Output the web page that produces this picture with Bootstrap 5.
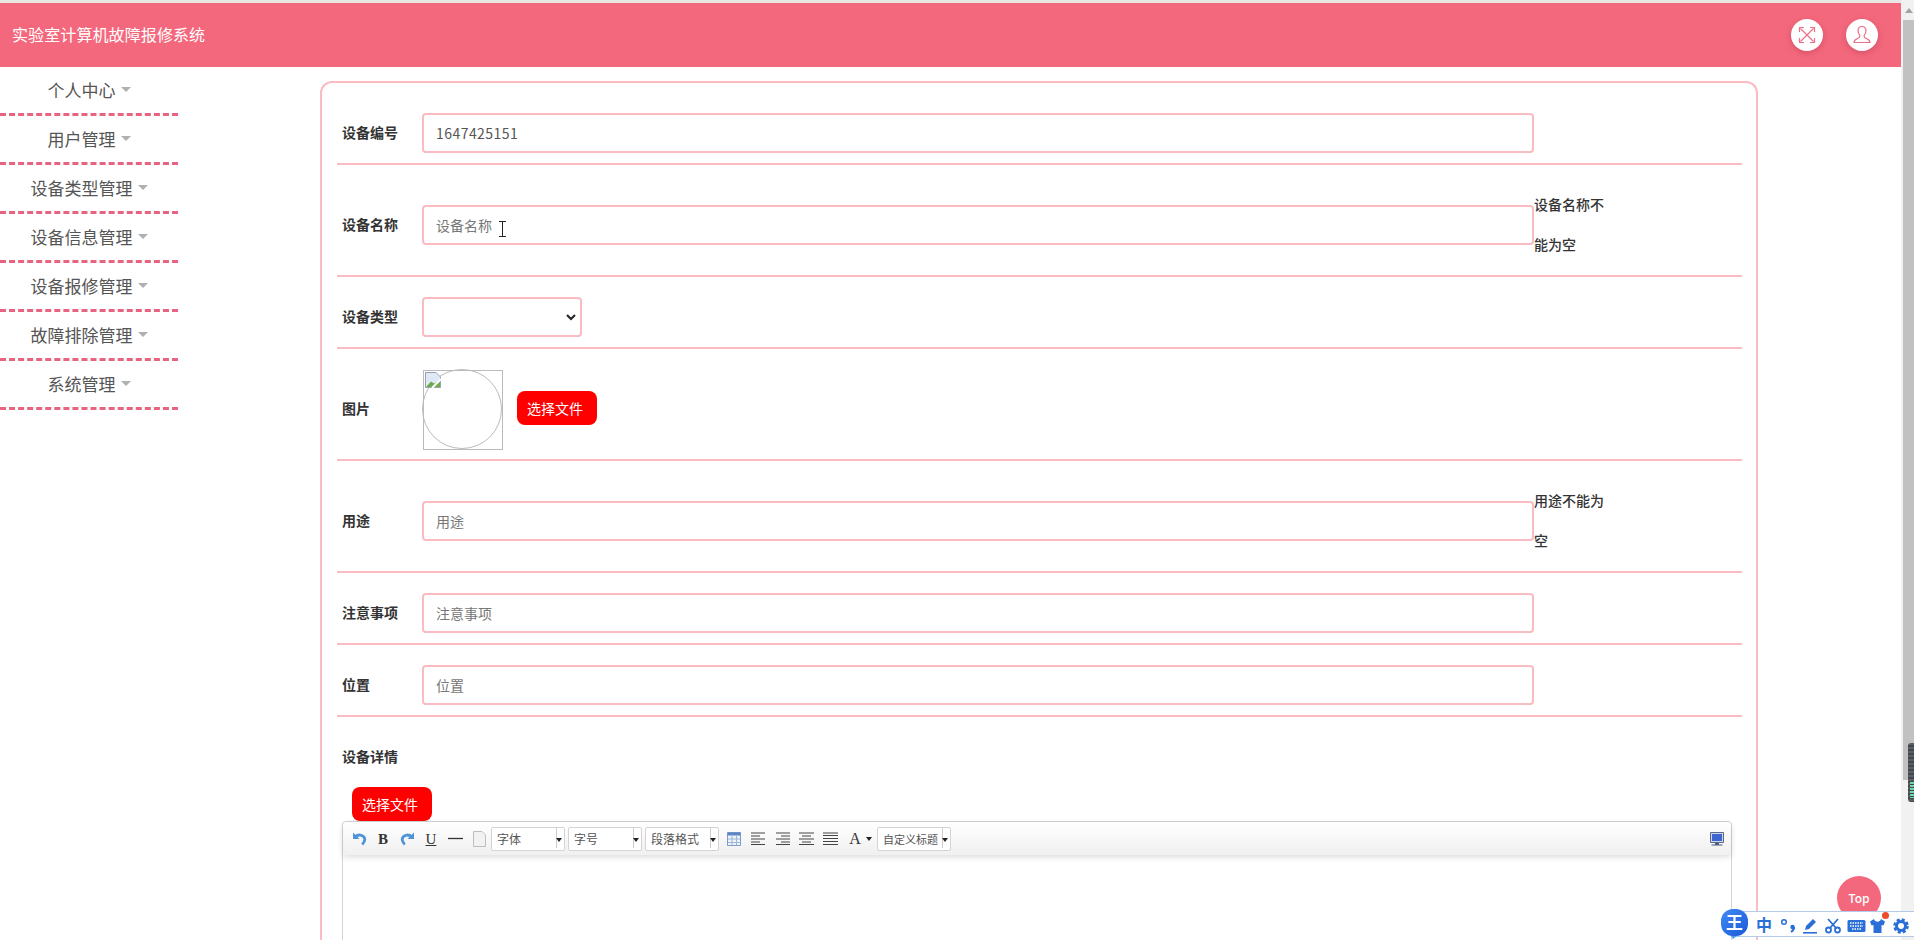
<!DOCTYPE html>
<html lang="zh-CN">
<head>
  <meta charset="UTF-8">
  <meta name="viewport" content="width=device-width, initial-scale=1.0">
  <title>实验室计算机故障报修系统</title>
  <link href="https://cdn.jsdelivr.net/npm/bootstrap@5.3.0/dist/css/bootstrap.min.css" rel="stylesheet">
  <style>
    html, body { height: 940px; overflow: hidden; }
    body { font-family: "Noto Sans CJK SC", "Noto Sans", sans-serif; font-size: 14px; color: #333; background: #fff; }
    .page-main { width: 1901px; height: 940px; overflow: hidden; }

    /* fake browser scrollbar */
    .fake-scroll { width: 13px; height: 940px; background: #f1f1f1; position: relative; }
    .fake-scroll .arrow { position: absolute; left: 4px; top: 8px; width: 0; height: 0; border: 4px solid transparent; border-top: 0; border-bottom: 5px solid #a3a3a3; }
    .fake-scroll .thumb { position: absolute; left: 2px; right: 0; top: 20px; height: 760px; background: #c1c1c1; }
    .fake-scroll .dock { position: absolute; left: 7px; right: 0; top: 743px; height: 59px; border-radius: 3px 0 0 3px; background: repeating-linear-gradient(#5b5e66 0 2px, #43464d 2px 4px); }
    .fake-scroll .dock-low { position: absolute; left: 9px; right: 0; top: 782px; height: 16px; background: repeating-linear-gradient(#6fd6ae 0 2px, #43464d 2px 3px); }

    .top-strip { height: 3px; background: #ebe6e6; }
    .head-bar { height: 64px; padding: 0 23px 0 12px; background: #f4687d; }
    .head-bar .navbar-brand { margin: 0; padding: 0 0 2px; font-size: 16px; letter-spacing: .1px; color: #fff; }
    .head-btn { width: 32px; height: 32px; border-radius: 50%; background: #fff; box-shadow: 0 2px 6px rgba(150, 40, 60, .35); }

    .side-menu { width: 178px; flex: none; }
    .side-link { height: 49px; padding: 0 0 1px; border-bottom: 3px dashed #e8637f; color: #555; font-size: 17px; }
    .side-link:hover { color: #555; }
    .side-link::after { color: #b0b0b0; margin-left: 5px; }

    .form-panel { width: 1438px; margin: 14px 0 0 142px; padding: 10px 14px 0 15px; border: 2px solid #f8bcc2; border-bottom: 0; border-radius: 12px 12px 0 0; }
    .form-line { padding: 20px 0 10px 5px; border-bottom: 2px solid #f8bcc2; }
    .form-line-last { padding: 20px 0 0 5px; }
    .line-label { width: 80px; flex: none; padding-bottom: 2px; font-weight: 700; color: #333; font-size: 14px; line-height: 38px; }
    .line-input { width: 1112px; height: 40px; flex: none; padding: 0 12px; border: 2px solid #f8bcc2; border-radius: 4px; font-size: 14px; color: #555; }
    .line-input::placeholder { color: #777; }
    .line-num { letter-spacing: .45px; }
    .line-select { width: 160px; height: 40px; padding: 0 10px; border: 2px solid #f8bcc2; border-radius: 4px; --bs-form-select-bg-img: none; }
    .select-mark { margin-left: -16px; }
    .line-error { width: 72px; flex: none; margin: -1px 0 1px; font-weight: 500; font-size: 14px; line-height: 40px; color: #333; }
    .pic-circle { width: 80px; height: 80px; flex: none; position: relative; border: 1px solid #bbb; border-radius: 50%; }
    .pic-frame { position: absolute; left: 0; top: 0; width: 80px; height: 80px; border: 1px solid #bbb; }
    .pic-broken { position: absolute; left: 2px; top: 2px; }
    .pick-btn { width: 80px; height: 34px; padding: 0 4px 0 0; line-height: 32px; border: 0; border-radius: 8px; background: #f00; color: #fff; font-size: 14px; }
    .pick-btn:hover { background: #f00; color: #fff; }
    .pic-btn-gap { margin: 0 0 2px 15px; }
    .detail-btn { margin: 10px 0 0 10px; display: block; }
    .mouse-beam { position: absolute; left: 76px; top: 16px; }

    .editor-box { width: 1390px; height: 300px; border: 1px solid #d4d4d4; border-radius: 4px 4px 0 0; }
    .editor-bar { height: 33px; padding: 0 2px 0 4px; background: linear-gradient(#fff, #f0f0f0); box-shadow: 0 2px 6px rgba(0, 0, 0, .14); border-radius: 4px 4px 0 0; }
    .tb-ico { width: 24px; height: 24px; flex: none; font-family: "Liberation Serif", serif; font-weight: 700; font-size: 15px; line-height: 24px; text-align: center; color: #333; }
    .tb-u { font-weight: 400; }
    .tb-a { width: 20px; margin-left: 3px; font-size: 16px; font-weight: 400; }
    .tb-combo { width: 74px; height: 24px; flex: none; margin-right: 3px; position: relative; border: 1px solid #d4d4d4; border-radius: 2px; background: #fff; font-size: 12px; line-height: 22px; color: #555; padding-left: 5px; }
    .tb-combo > span { display: block; width: 58px; white-space: nowrap; }
    .tb-combo-small { font-size: 11px; }
    .tb-combo::before { content: ""; position: absolute; left: 64px; top: 0; height: 20px; border-left: 1px solid #ccc; }
    .tb-combo::after { content: ""; position: absolute; right: 2px; top: 10px; border: 3px solid transparent; border-top: 4px solid #222; border-bottom: 0; }
    .tb-caret { width: 0; height: 0; margin: 0 5px 0 1px; border: 3px solid transparent; border-top: 4px solid #222; border-bottom: 0; flex: none; }

    .top-fab { position: fixed; left: 1837px; top: 876px; width: 44px; height: 44px; border-radius: 50%; background: #f4687d; color: #fff; font-size: 12px; font-weight: 500; line-height: 44px; text-align: center; }
    .ime-bar { position: fixed; left: 1733px; top: 911px; width: 181px; height: 26px; background: #fff; border: 1px solid #b5c9e8; border-right: 0; color: #2a6ed8; }
    .ime-logo { position: fixed; left: 1721px; top: 909px; width: 27px; height: 27px; border-radius: 12px; background: linear-gradient(135deg, #3f8cf5, #1d58d6); color: #fff; font-weight: 700; font-size: 17px; line-height: 26px; text-align: center; }
    .ime-tail { position: fixed; left: 1729px; top: 933px; width: 0; height: 0; border-left: 4px solid transparent; border-right: 8px solid transparent; border-top: 6px solid #4ba2ef; }
    .ime-item { position: absolute; top: 0; height: 24px; line-height: 24px; }
    .ime-han { left: 21px; width: 18px; font-size: 16px; font-weight: 700; text-align: center; }
    .ime-dot { position: fixed; left: 1882px; top: 912px; width: 7px; height: 7px; border-radius: 50%; background: #ee4b2b; }
  </style>
</head>
<body class="d-flex">
  <div class="page-main">
    <div class="top-strip"></div>
    <nav class="navbar head-bar justify-content-between flex-nowrap">
      <span class="navbar-brand">实验室计算机故障报修系统</span>
      <div class="d-flex" style="gap:23px">
        <div class="head-btn d-flex align-items-center justify-content-center">
          <svg width="18" height="18" viewBox="0 0 18 18" fill="none" stroke="#ee6f88" stroke-width="1.2">
            <path d="M2.5 2.5 15.5 15.5M15.5 2.5 2.5 15.5"/>
            <path d="M1.5 6V1.5H6M12 1.5h4.5V6M1.5 12v4.5H6M12 16.5h4.5V12"/>
          </svg>
        </div>
        <div class="head-btn d-flex align-items-center justify-content-center">
          <svg width="20" height="20" viewBox="0 0 20 20" fill="none" stroke="#ee6f88" stroke-width="1.2">
            <path d="M10 1.5c-2.6 0-4 1.8-4 4.2 0 2 .8 3.4 1.8 4.4v1.7c0 .8-1 1.3-2.6 2C3.4 14.600 2 15.400 2 17.500h16c0-2.100-1.400-2.900-3.200-3.700-1.600-.7-2.600-1.200-2.600-2v-1.700c1-1 1.800-2.400 1.800-4.400 0-2.400-1.400-4.200-4-4.200z"/>
          </svg>
        </div>
      </div>
    </nav>

    <div class="d-flex align-items-start">
      <nav class="side-menu nav flex-column">
        <a class="nav-link side-link dropdown-toggle d-flex align-items-center justify-content-center" href="#">个人中心</a>
        <a class="nav-link side-link dropdown-toggle d-flex align-items-center justify-content-center" href="#">用户管理</a>
        <a class="nav-link side-link dropdown-toggle d-flex align-items-center justify-content-center" href="#">设备类型管理</a>
        <a class="nav-link side-link dropdown-toggle d-flex align-items-center justify-content-center" href="#">设备信息管理</a>
        <a class="nav-link side-link dropdown-toggle d-flex align-items-center justify-content-center" href="#">设备报修管理</a>
        <a class="nav-link side-link dropdown-toggle d-flex align-items-center justify-content-center" href="#">故障排除管理</a>
        <a class="nav-link side-link dropdown-toggle d-flex align-items-center justify-content-center" href="#">系统管理</a>
      </nav>

      <form class="form-panel">
        <div class="form-line d-flex align-items-center">
          <label class="line-label">设备编号</label>
          <input class="form-control line-input line-num" type="text" value="1647425151">
        </div>

        <div class="form-line d-flex align-items-center">
          <label class="line-label">设备名称</label>
          <div class="position-relative">
            <input class="form-control line-input" type="text" placeholder="设备名称">
            <svg class="mouse-beam" width="9" height="16" viewBox="0 0 9 16" fill="none" stroke="#222" stroke-width="1"><path d="M1 .5h7M4.500 .5v15M1 15.500h7"/></svg>
          </div>
          <div class="line-error">设备名称不能为空</div>
        </div>

        <div class="form-line d-flex align-items-center">
          <label class="line-label">设备类型</label>
          <select class="form-select line-select">
            <option></option>
          </select>
          <svg class="select-mark" width="10" height="7" viewBox="0 0 10 7" fill="none" stroke="#222" stroke-width="2"><path d="M1 1l4 4 4-4"/></svg>
        </div>

        <div class="form-line d-flex align-items-center">
          <label class="line-label">图片</label>
          <div class="pic-circle">
            <div class="pic-frame"></div>
            <svg class="pic-broken" width="16" height="16" viewBox="0 0 16 16">
              <path d="M.5 .5H11L15.500 5V15.500H.5z" fill="#dfe8f7" stroke="#9aa3ad"/>
              <path d="M1 15 6 9.500 9 11.500 15 8V15H1z" fill="#6fa84f"/>
              <path d="M7 16 16 7" stroke="#fff" stroke-width="2"/>
            </svg>
          </div>
          <button type="button" class="btn pick-btn pic-btn-gap">选择文件</button>
        </div>

        <div class="form-line d-flex align-items-center">
          <label class="line-label">用途</label>
          <input class="form-control line-input" type="text" placeholder="用途">
          <div class="line-error">用途不能为空</div>
        </div>

        <div class="form-line d-flex align-items-center">
          <label class="line-label">注意事项</label>
          <input class="form-control line-input" type="text" placeholder="注意事项">
        </div>

        <div class="form-line d-flex align-items-center">
          <label class="line-label">位置</label>
          <input class="form-control line-input" type="text" placeholder="位置">
        </div>

        <div class="form-line-last">
          <label class="line-label d-block">设备详情</label>
          <button type="button" class="btn pick-btn detail-btn">选择文件</button>
          <div class="editor-box">
            <div class="editor-bar d-flex align-items-center">
              <div class="tb-ico d-flex align-items-center justify-content-center">
                <svg width="15" height="16" viewBox="0 0 15 16" fill="none"><path d="M1 1.500V8H7.500z" fill="#4f94d8"/><path d="M3 6c3-3 8-2.500 9.500 1 .8 2.200-.3 4.500-2.300 6.500" stroke="#4f94d8" stroke-width="2.800"/></svg>
              </div>
              <div class="tb-ico">B</div>
              <div class="tb-ico d-flex align-items-center justify-content-center">
                <svg width="15" height="16" viewBox="0 0 15 16" fill="none"><path d="M14 1.500V8H7.500z" fill="#4f94d8"/><path d="M12 6C9 3 4 3.500 2.500 7c-.8 2.200.3 4.500 2.300 6.500" stroke="#4f94d8" stroke-width="2.800"/></svg>
              </div>
              <div class="tb-ico tb-u text-decoration-underline">U</div>
              <div class="tb-ico d-flex align-items-center justify-content-center">
                <svg width="15" height="3" viewBox="0 0 15 3"><path d="M0 1.500h15" stroke="#333" stroke-width="1.300"/></svg>
              </div>
              <div class="tb-ico d-flex align-items-center justify-content-center">
                <svg width="13" height="16" viewBox="0 0 13 16"><path d="M.5 .5H9L12.500 4V15.500H.5z" fill="#f2f2f2" stroke="#bdbdbd"/></svg>
              </div>
              <div class="tb-combo"><span>字体</span></div>
              <div class="tb-combo"><span>字号</span></div>
              <div class="tb-combo"><span>段落格式</span></div>
              <div class="tb-ico d-flex align-items-center justify-content-center">
                <svg width="14" height="14" viewBox="0 0 14 14"><path d="M.5 .5h13v13H.5z" fill="#eef3fa" stroke="#7f9cc8"/><path d="M.5 .5h13v3H.5z" fill="#5f86c4"/><path d="M5 4v9M9.500 4v9M1 7h12M1 10.500h12" stroke="#9db5d8"/></svg>
              </div>
              <div class="tb-ico d-flex align-items-center justify-content-center">
                <svg width="15" height="13" viewBox="0 0 15 13" stroke="#444"><path d="M0 1h14M0 4h9M0 7h14M0 10h9M0 12.500h14"/></svg>
              </div>
              <div class="tb-ico d-flex align-items-center justify-content-center">
                <svg width="15" height="13" viewBox="0 0 15 13" stroke="#444"><path d="M1 1h14M6 4h9M1 7h14M6 10h9M1 12.500h14"/></svg>
              </div>
              <div class="tb-ico d-flex align-items-center justify-content-center">
                <svg width="15" height="13" viewBox="0 0 15 13" stroke="#444"><path d="M0 1h15M3 4h9M0 7h15M3 10h9M0 12.500h15"/></svg>
              </div>
              <div class="tb-ico d-flex align-items-center justify-content-center">
                <svg width="15" height="13" viewBox="0 0 15 13" stroke="#444"><path d="M0 1h15M0 3.500h15M0 6.500h15M0 9.500h15M0 12.500h15"/></svg>
              </div>
              <div class="tb-ico tb-a">A</div>
              <div class="tb-caret"></div>
              <div class="tb-combo tb-combo-small"><span>自定义标题</span></div>
              <div class="tb-ico d-flex align-items-center justify-content-center ms-auto">
                <svg width="14" height="14" viewBox="0 0 14 14"><path d="M.5 .5h13v10H.5z" fill="#cfd6e6" stroke="#5a6a8a"/><path d="M2 2h10v7H2z" fill="#3f66d0"/><path d="M5.500 11h3v1.500h-3zM1.500 13h11" stroke="#4a5a7a" fill="#4a5a7a"/></svg>
              </div>
            </div>
          </div>
        </div>
      </form>
    </div>
  </div>

  <div class="fake-scroll">
    <div class="arrow"></div>
    <div class="thumb"></div>
    <div class="dock"></div>
    <div class="dock-low"></div>
  </div>

  <div class="top-fab">Top</div>

  <div class="ime-bar">
    <div class="ime-item ime-han">中</div>
    <div class="ime-item" style="left:45px">
      <svg width="20" height="24" viewBox="0 0 20 24" fill="none"><circle cx="5" cy="8" r="2.300" stroke="#2a6ed8" stroke-width="1.500"/><circle cx="13.500" cy="13" r="2.200" fill="#2a6ed8"/><path d="M15 13c.3 2-.8 3.700-3 5" stroke="#2a6ed8" stroke-width="2"/></svg>
    </div>
    <div class="ime-item" style="left:68px">
      <svg width="18" height="24" viewBox="0 0 18 24" fill="#2a6ed8"><path d="M11 5l3 3-7 7-4 1 1-4z"/><path d="M1 18h14v1.600H1z"/></svg>
    </div>
    <div class="ime-item" style="left:90px">
      <svg width="18" height="24" viewBox="0 0 18 24" fill="none" stroke="#2a6ed8" stroke-width="1.800"><circle cx="4.500" cy="16" r="2.500"/><circle cx="13.500" cy="16" r="2.500"/><path d="M6 14 14 5M12 14 4 5"/></svg>
    </div>
    <div class="ime-item" style="left:113px">
      <svg width="19" height="24" viewBox="0 0 19 24"><rect x=".500" y="6" width="18" height="12" rx="1.500" fill="#2a6ed8"/><path d="M3 9h13M3 12h13M5 15h9" stroke="#fff" stroke-width="1.300" stroke-dasharray="1.500 1"/></svg>
    </div>
    <div class="ime-item" style="left:135px">
      <svg width="17" height="24" viewBox="0 0 17 24" fill="#2a6ed8"><path d="M5 5 1 7.500l1.500 4L4.500 11V19h8v-8l2 .5 1.500-4L12 5c-.5 2-1.800 2.700-3.500 2.700S5.500 7 5 5z"/></svg>
    </div>
    <div class="ime-item" style="left:159px">
      <svg width="16" height="24" viewBox="0 0 16 24" fill="none"><circle cx="8" cy="12" r="4.500" stroke="#2a6ed8" stroke-width="3"/><circle cx="8" cy="12" r="6.500" stroke="#2a6ed8" stroke-width="2.500" stroke-dasharray="3 2.100"/></svg>
    </div>
  </div>
  <div class="ime-dot"></div>
  <div class="ime-tail"></div>
  <div class="ime-logo">王</div>

  <script src="https://cdn.jsdelivr.net/npm/bootstrap@5.3.0/dist/js/bootstrap.bundle.min.js"></script>
</body>
</html>
